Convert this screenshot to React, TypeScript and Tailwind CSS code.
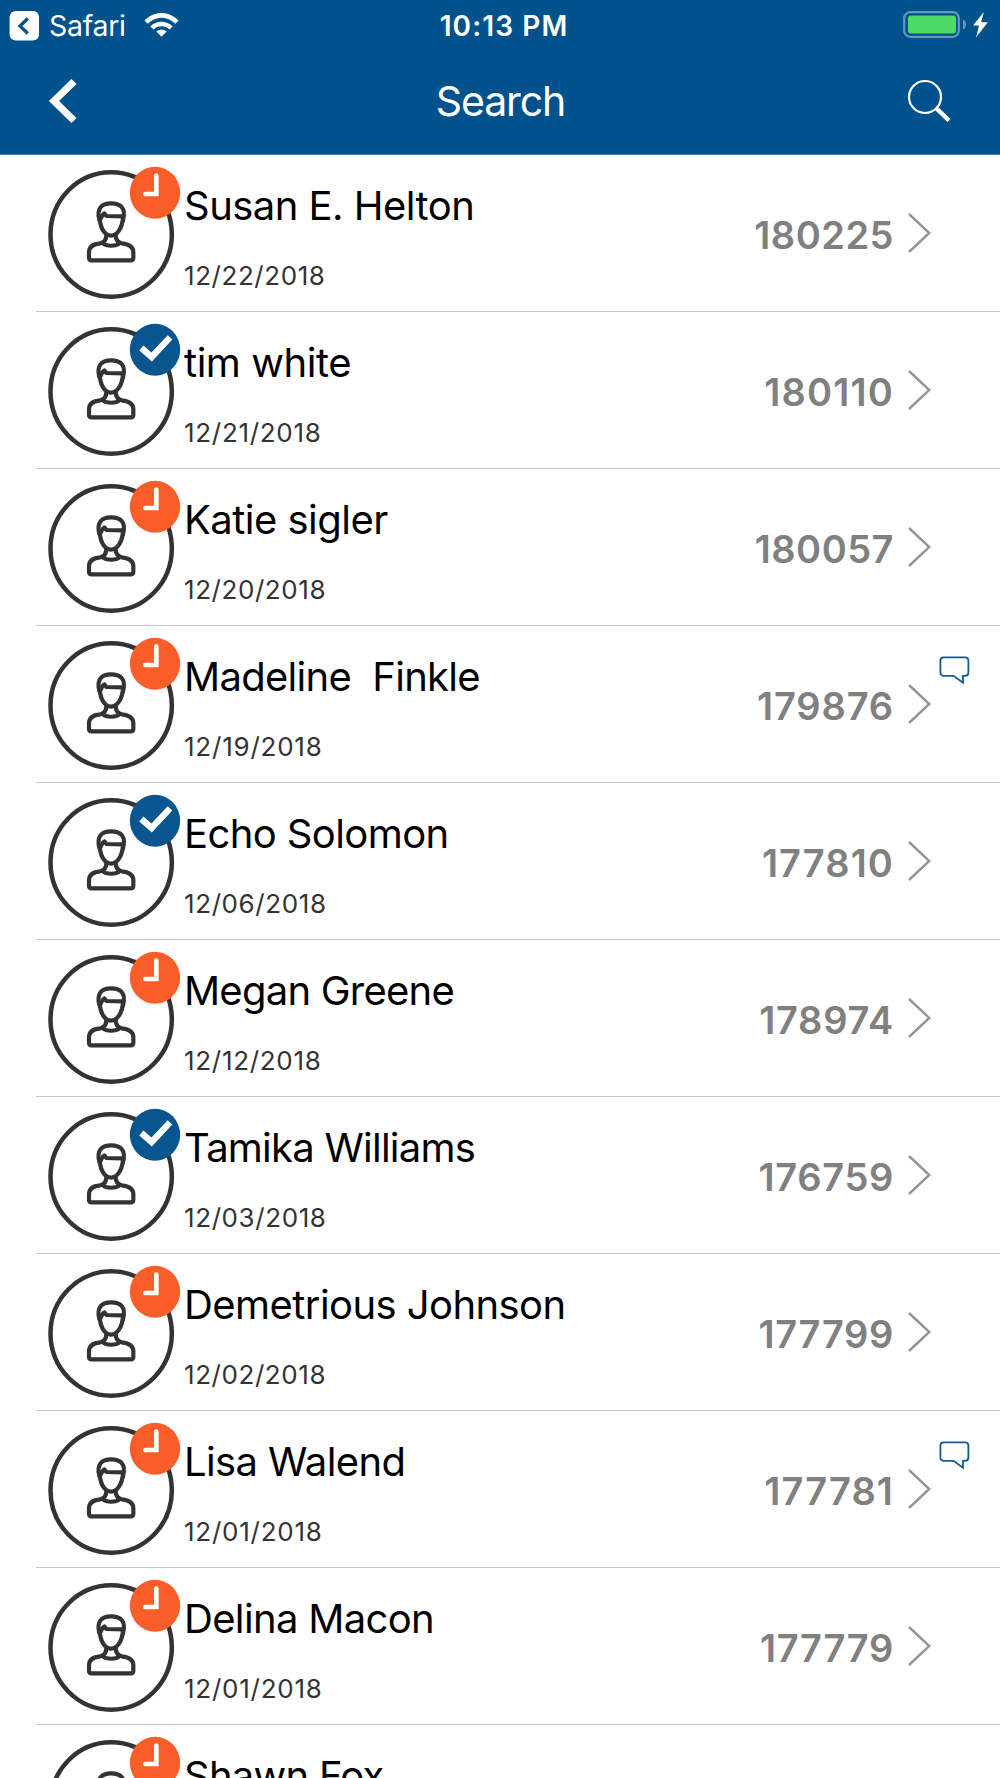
import React from 'react';

type Status = 'pending' | 'done';

interface Entry {
  name: string;
  date: string;
  code: string;
  status: Status;
  hasNote?: boolean;
  nameSpacing: string;
  dateSpacing: string;
  codeSpacing: string;
}

const entries: Entry[] = [
  { name: 'Susan E. Helton', date: '12/22/2018', code: '180225', status: 'pending', nameSpacing: 'tracking-[-0.53px]', dateSpacing: 'tracking-[0.57px]', codeSpacing: 'tracking-[0.5px]' },
  { name: 'tim white', date: '12/21/2018', code: '180110', status: 'done', nameSpacing: 'tracking-[-0.45px]', dateSpacing: 'tracking-[0.7px]', codeSpacing: 'tracking-[1.2px]' },
  { name: 'Katie sigler', date: '12/20/2018', code: '180057', status: 'pending', nameSpacing: 'tracking-[-0.53px]', dateSpacing: 'tracking-[0.57px]', codeSpacing: 'tracking-[0.5px]' },
  { name: 'Madeline  Finkle', date: '12/19/2018', code: '179876', status: 'pending', hasNote: true, nameSpacing: 'tracking-[-0.7px]', dateSpacing: 'tracking-[0.78px]', codeSpacing: 'tracking-[0.85px]' },
  { name: 'Echo Solomon', date: '12/06/2018', code: '177810', status: 'done', nameSpacing: 'tracking-[-0.6px]', dateSpacing: 'tracking-[0.6px]', codeSpacing: 'tracking-[1.1px]' },
  { name: 'Megan Greene', date: '12/12/2018', code: '178974', status: 'pending', nameSpacing: 'tracking-[-0.76px]', dateSpacing: 'tracking-[0.7px]', codeSpacing: 'tracking-[0.75px]' },
  { name: 'Tamika Williams', date: '12/03/2018', code: '176759', status: 'done', nameSpacing: 'tracking-[-0.76px]', dateSpacing: 'tracking-[0.6px]', codeSpacing: 'tracking-[0.7px]' },
  { name: 'Demetrious Johnson', date: '12/02/2018', code: '177799', status: 'pending', nameSpacing: 'tracking-[-0.57px]', dateSpacing: 'tracking-[0.57px]', codeSpacing: 'tracking-[0.65px]' },
  { name: 'Lisa Walend', date: '12/01/2018', code: '177781', status: 'pending', hasNote: true, nameSpacing: 'tracking-[-0.62px]', dateSpacing: 'tracking-[0.75px]', codeSpacing: 'tracking-[1.1px]' },
  { name: 'Delina Macon', date: '12/01/2018', code: '177779', status: 'pending', nameSpacing: 'tracking-[-0.66px]', dateSpacing: 'tracking-[0.75px]', codeSpacing: 'tracking-[0.7px]' },
];

function StatusBar() {
  return (
    <div className="grid h-[50px] grid-cols-[1fr_auto_1fr] items-center pl-[9px] pr-[11px]">
      <div className="flex items-center">
        <svg className="h-[31px] w-[31px]" viewBox="0 0 31 31">
          <rect x="0.6" y="1" width="29.400" height="29.400" rx="6" fill="#fff" />
          <path d="M18.800 8.500 L11 16 L18.800 23.500" fill="none" stroke="#00528c" strokeWidth="3.200" />
        </svg>
        <span className="ml-[9px] w-[78px] pt-[2px] text-[28.5px] leading-none tracking-[-0.3px]">Safari</span>
        <svg className="ml-[17px] h-[26px] w-[36px]" viewBox="0 0 36 26" fill="#fff">
          <path d="M0.500 8.6 C10 -1.400 25 -1.400 34.500 8.6 L31.3 11.8 C23.500 3.8 11.500 3.8 3.700 11.8 Z" />
          <path d="M6.300 14.4 C12.700 8.2 22.3 8.2 28.700 14.4 L25.5 17.6 C20.900 13.2 14.100 13.2 9.500 17.6 Z" />
          <path d="M12.300 19.6 C15.200 16.8 19.8 16.8 22.700 19.6 L17.500 24.8 Z" />
        </svg>
      </div>
      <span className="pl-[10px] pt-[2px] text-[28px] font-semibold leading-none tracking-[1.1px]">10:13 PM</span>
      <div className="flex items-center justify-end">
        <svg className="h-[28px] w-[86px]" viewBox="0 0 86 28">
          <rect x="1.2" y="1.2" width="54.6" height="24.6" rx="6" fill="none" stroke="#6697bd" strokeWidth="2.2" />
          <rect x="5" y="4.5" width="48" height="18" rx="3" fill="#4cd964" />
          <path d="M60 8.5 C64 10 64 17 60 18.5 Z" fill="#6697bd" />
          <path d="M80.8 1 L70 14.6 L76 14.6 L73 26.4 L84.8 11.2 L78.2 11.2 Z" fill="#fff" />
        </svg>
      </div>
    </div>
  );
}

function NavBar() {
  return (
    <div className="grid h-[101px] grid-cols-[1fr_auto_1fr] items-center pl-[48px] pr-[49px]">
      <button type="button" aria-label="Back" className="justify-self-start">
        <svg className="h-[46px] w-[30px]" viewBox="0 0 30 46">
          <path d="M26 3.5 L6 23 L26 42.500" fill="none" stroke="#fff" strokeWidth="7.2" />
        </svg>
      </button>
      <h1 className="pl-[2px] pt-[2px] text-[41px] leading-none tracking-[-1.1px]">Search</h1>
      <button type="button" aria-label="Search" className="justify-self-end">
        <svg className="h-[44px] w-[44px]" viewBox="0 0 44 44">
          <circle cx="18" cy="18" r="16" fill="none" stroke="#fff" strokeWidth="2.2" />
          <path d="M29.5 29.5 L42 41.5" stroke="#fff" strokeWidth="4.5" />
        </svg>
      </button>
    </div>
  );
}

function Avatar({ status }: { status: Status }) {
  return (
    <svg className="h-[133px] w-[133px] shrink-0" viewBox="54 48 399 399">
      <ellipse cx="243.500" cy="253.500" rx="182" ry="186.500" fill="none" stroke="#333" strokeWidth="13.500" />
      <g fill="none" stroke="#333" strokeWidth="12.500" strokeLinejoin="round" strokeLinecap="round">
        <path d="M208 210 C199 176 214 160 243 160 C272 160 289 174 279 211" />
        <path d="M210 209 C215 205 215 193 223 190 L229 198 L278 199" />
        <path d="M209 204 C211 235 224 257 243 257 C262 257 276 235 279 204" />
        <path d="M229 255 C229 269 223 277 211 280 C188 282 177 290 177 307 L177 323 Q177 331 185 331 L302 331 Q310 331 310 323 L310 307 C310 289 297 282 275 280 C264 277 257 269 257 255" />
        <path d="M217 279 C230 290 257 290 270 279" />
      </g>
      <ellipse cx="375" cy="128" rx="75.500" ry="78" fill={status === 'done' ? '#09558f' : '#f95e28'} />
      {status === 'done' ? (
        <path d="M334 123 L365 150 L420 91" fill="none" stroke="#fff" strokeWidth="19" strokeLinejoin="miter" />
      ) : (
        <path d="M379 77 L379 132 L346 132" fill="none" stroke="#fff" strokeWidth="14" strokeLinecap="round" />
      )}
    </svg>
  );
}

function Note() {
  return (
    <svg className="absolute right-[30px] top-[29px] h-[30px] w-[31px]" viewBox="0 0 31 30">
      <path
        d="M4.500 2.300 L26 2.300 Q29.400 2.300 29.400 5.700 L29.400 17.500 Q29.400 20.800 26 20.800 L24 20.800 L24 27.800 L14.500 20.800 L4.500 20.800 Q1.400 20.800 1.400 17.500 L1.400 5.700 Q1.400 2.300 4.500 2.300 Z"
        fill="none"
        stroke="#0f5c9a"
        strokeWidth="1.800"
      />
    </svg>
  );
}

function Row({ entry }: { entry: Entry }) {
  return (
    <li className="relative ml-[36px] flex h-[157px] shrink-0 border-b border-[#c8c7cc] pl-[12px] pt-[11px]">
      <Avatar status={entry.status} />
      <div className="ml-[3px] flex-1 pt-[16px]">
        <div className={`whitespace-pre text-[40px] leading-[48px] text-black ${entry.nameSpacing}`}>{entry.name}</div>
        <div className={`mt-[30px] text-[26px] leading-[32px] text-[#333] ${entry.dateSpacing}`}>{entry.date}</div>
      </div>
      <div className="flex items-start pr-[68px] pt-[47px]">
        <span className={`mt-[2px] text-[38px] font-semibold leading-[40px] text-[#808080] ${entry.codeSpacing}`}>{entry.code}</span>
        <svg className="ml-[14px] h-[40px] w-[24px]" viewBox="0 0 24 40">
          <path d="M1 1 L21.300 20 L1 39" fill="none" stroke="#949494" strokeWidth="2.400" />
        </svg>
      </div>
      {entry.hasNote && <Note />}
    </li>
  );
}

export default function App() {
  return (
    <div className="flex h-[1778px] w-[1000px] flex-col overflow-hidden bg-white font-['Inter',sans-serif]">
      <header className="h-[155px] shrink-0 border-b border-[#3e7dab] bg-[#00528c] text-white">
        <StatusBar />
        <NavBar />
      </header>
      <ul>
        {entries.map((entry) => (
          <Row key={entry.name} entry={entry} />
        ))}
        {/* next entry, only its top peeks in above the fold */}
        <li className="ml-[36px] flex h-[53px] overflow-hidden pl-[12px] pt-[11px]">
          <Avatar status="pending" />
          <div className="ml-[3px] pt-[16px] text-[40px] leading-[48px] tracking-[-0.75px] text-black">Shawn Fox</div>
        </li>
      </ul>
    </div>
  );
}
